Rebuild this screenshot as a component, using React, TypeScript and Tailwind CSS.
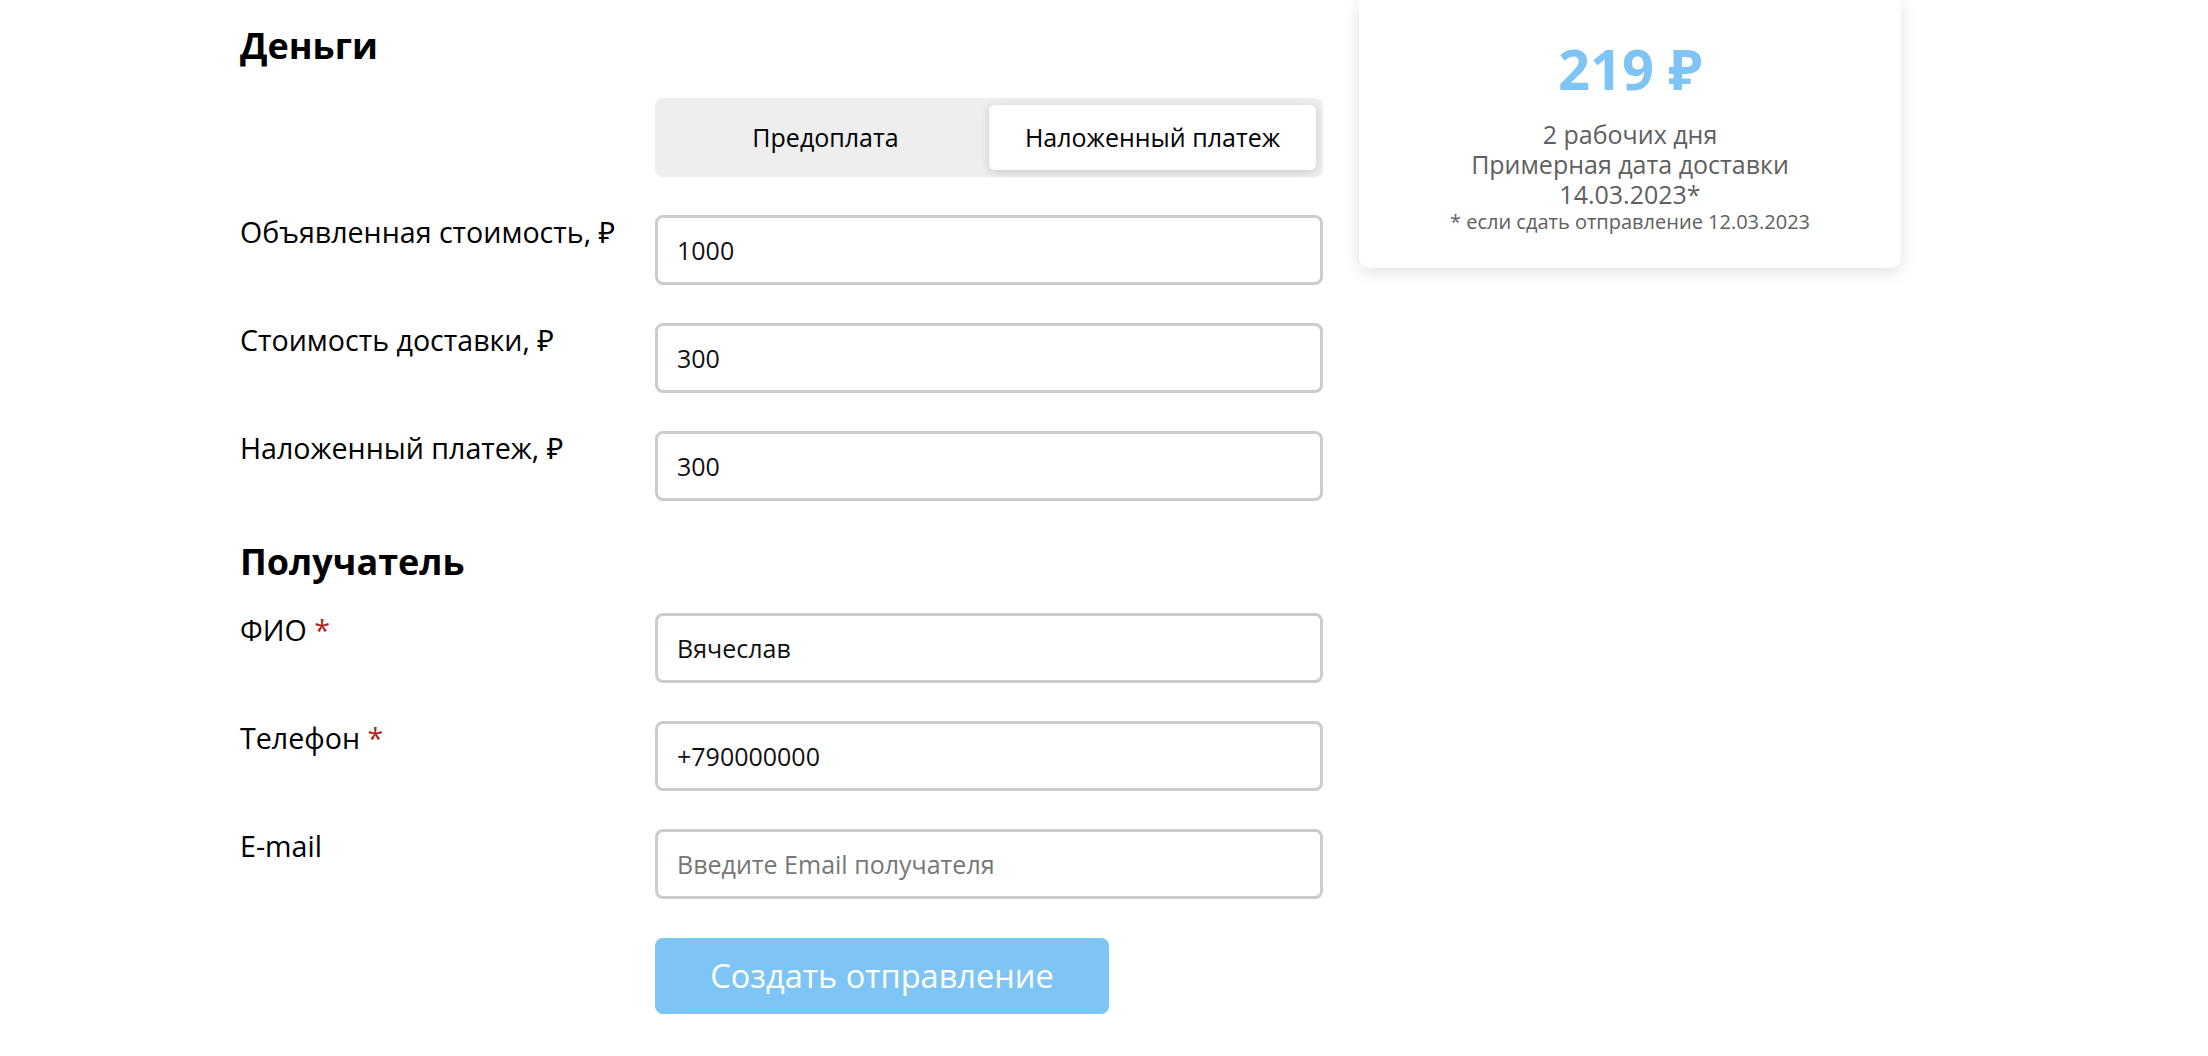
import { useState } from 'react'

const font = { fontFamily: '"Open Sans", "Noto Sans", sans-serif' }

function Field({ label, required, value, placeholder }: { label: string; required?: boolean; value?: string; placeholder?: string }) {
  return (
    <div className="flex items-start">
      <div className="w-[415px] shrink-0 text-[28.6px] leading-[33px] text-black">
        {label}
        {required && <span className="text-[#a8261b]"> *</span>}
      </div>
      <input
        className="h-[70px] w-[668px] rounded-[8px] border-[3px] border-[#cccccc] bg-white pl-[19px] text-[25px] text-[#111] outline-none placeholder:text-[#777]"
        defaultValue={value}
        placeholder={placeholder}
      />
    </div>
  )
}

export default function App() {
  const [mode, setMode] = useState<'pre' | 'cod'>('cod')

  return (
    <div className="min-h-screen bg-white" style={font}>
      <div className="flex items-start gap-[36px] pl-[240px]">
        {/* Form */}
        <div className="flex w-[1083px] flex-col pt-[24px]">
          <h2 className="text-[36px] font-bold leading-[44px] text-black">Деньги</h2>

          <div className="mt-[30px] ml-[415px] flex w-[668px] rounded-[8px] bg-[#eeeeee] p-[7px]">
            <button
              onClick={() => setMode('pre')}
              className={
                mode === 'pre'
                  ? 'h-[65px] flex-1 rounded-[6px] bg-white text-[25px] text-black shadow-[0_2px_10px_rgba(0,0,0,0.15)]'
                  : 'h-[65px] flex-1 rounded-[6px] text-[25px] text-black'
              }
            >
              Предоплата
            </button>
            <button
              onClick={() => setMode('cod')}
              className={
                mode === 'cod'
                  ? 'h-[65px] flex-1 rounded-[6px] bg-white text-[25px] text-black shadow-[0_2px_10px_rgba(0,0,0,0.15)]'
                  : 'h-[65px] flex-1 rounded-[6px] text-[25px] text-black'
              }
            >
              Наложенный платеж
            </button>
          </div>

          <div className="mt-[38px] flex flex-col gap-[38px]">
            <Field label="Объявленная стоимость, ₽" value="1000" />
            <Field label="Стоимость доставки, ₽" value="300" />
            <Field label="Наложенный платеж, ₽" value="300" />
          </div>

          <h2 className="mt-[39px] text-[36px] font-bold leading-[44px] text-black">Получатель</h2>

          <div className="mt-[29px] flex flex-col gap-[38px]">
            <Field label="ФИО" required value="Вячеслав" />
            <Field label="Телефон" required value="+790000000" />
            <Field label="E-mail" placeholder="Введите Email получателя" />
          </div>

          <div className="mt-[39px] pl-[415px]">
            <button className="h-[76px] w-[454px] rounded-[8px] bg-[#7ec5f5] text-[32.5px] text-white">
              Создать отправление
            </button>
          </div>
        </div>

        {/* Price card */}
        <div className="flex w-[542px] flex-col items-center rounded-b-[10px] bg-white pt-[36px] pb-[34px] text-center shadow-[0_4px_18px_rgba(0,0,0,0.12)]">
          <div className="text-[56px] font-bold leading-[64px] text-[#7ec5f5]">219 ₽</div>
          <div className="mt-[19px] text-[25px] leading-[30px] text-[#606060]">
            <div>2 рабочих дня</div>
            <div>Примерная дата доставки</div>
            <div>14.03.2023*</div>
          </div>
          <div className="text-[20px] leading-[25px] text-[#606060]">* если сдать отправление 12.03.2023</div>
        </div>
      </div>
    </div>
  )
}
